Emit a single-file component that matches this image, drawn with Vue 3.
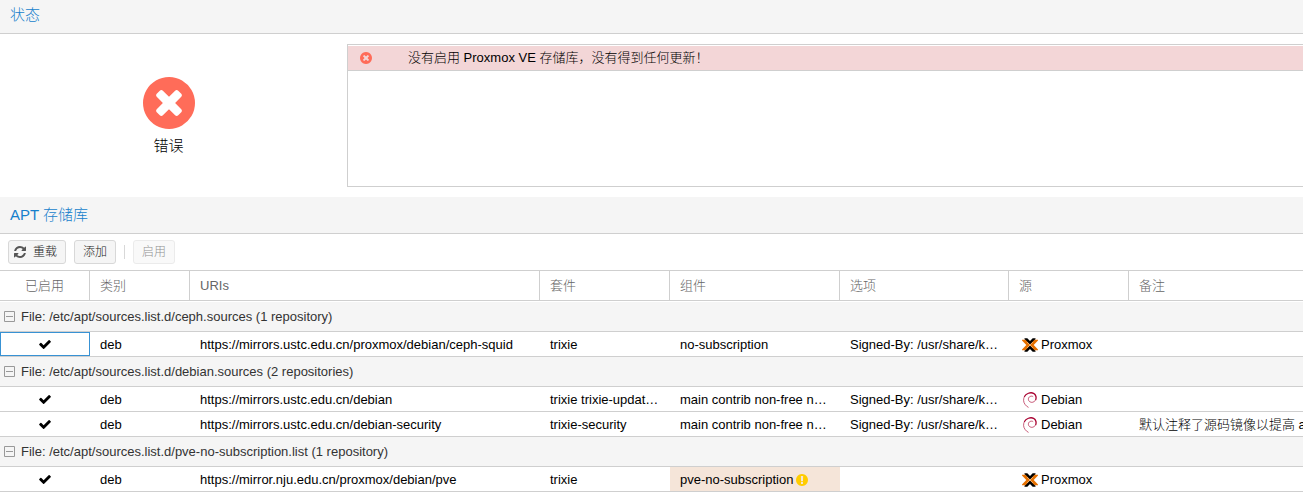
<script setup>
const icons = {
  error: 'M1277 1122q0-26-19-45L1077 896l181-181q19-19 19-45 0-27-19-46l-90-90q-19-19-46-19-26 0-45 19L896 715 715 534q-19-19-45-19-27 0-46 19l-90 90q-19 19-19 46 0 26 19 45l181 181-181 181q-19 19-19 45 0 27 19 46l90 90q19 19 46 19 26 0 45-19l181-181 181 181q19 19 45 19 27 0 46-19l90-90q19-19 19-46zm387-226q0 209-103 385.500T1281.500 1561.500 896 1664t-385.500-102.500T231 1281.500 128 896t103-385.500T510.500 230.500 896 128t385.500 102.500T1561 510.500 1664 896z',
  check: 'M1671 566q0 40-28 68l-724 724-136 136q-28 28-68 28t-68-28l-136-136-362-362q-28-28-28-68t28-68l136-136q28-28 68-28t68 28l294 295 656-657q28-28 68-28t68 28l136 136q28 28 28 68z',
  refresh: 'M1639 1056q0 5-1 7-64 268-268 434.500T892 1664q-146 0-282.500-55T366 1452l-129 129q-19 19-45 19t-45-19-19-45v-448q0-26 19-45t45-19h448q26 0 45 19t19 45-19 45l-137 137q71 66 161 102t187 36q134 0 250-65t186-179q11-17 53-117 8-23 30-23h192q13 0 22.500 9.500t9.500 22.500zm25-800v448q0 26-19 45t-45 19h-448q-26 0-45-19t-19-45 19-45l138-138q-148-137-349-137-134 0-250 65T460 628q-11 17-53 117-8 23-30 23H178q-13 0-22.500-9.500T146 736v-7q65-268 270-434.500T896 128q146 0 284 55.500T1425 340l130-129q19-19 45-19t45 19 19 45z',
  warning: 'M896 128q209 0 385.500 103T1561 510.500 1664 896t-103 385.500-279.500 279.500T896 1664t-385.500-103T231 1281.500 128 896t103-385.500T510.500 231 896 128zm128 1247v-190q0-14-9-23.500t-22-9.500H801q-13 0-23 10t-10 23v190q0 13 10 23t23 10h192q13 0 22-9.500t9-23.500zm-2-344l18-621q0-12-10-18-10-8-24-8H786q-14 0-24 8-10 6-10 18l17 621q0 10 10 17.500t24 7.500h185q14 0 23.500-7.500t10.500-17.500z',
}

const columns = ['已启用', '类别', 'URIs', '套件', '组件', '选项', '源', '备注']

const groups = [
  {
    title: 'File: /etc/apt/sources.list.d/ceph.sources (1 repository)',
    rows: [
      { uri: 'https://mirrors.ustc.edu.cn/proxmox/debian/ceph-squid', suite: 'trixie', component: 'no-subscription', options: 'Signed-By: /usr/share/k…', origin: 'Proxmox', comment: '', focused: true },
    ],
  },
  {
    title: 'File: /etc/apt/sources.list.d/debian.sources (2 repositories)',
    rows: [
      { uri: 'https://mirrors.ustc.edu.cn/debian', suite: 'trixie trixie-updat…', component: 'main contrib non-free n…', options: 'Signed-By: /usr/share/k…', origin: 'Debian', comment: '' },
      { uri: 'https://mirrors.ustc.edu.cn/debian-security', suite: 'trixie-security', component: 'main contrib non-free n…', options: 'Signed-By: /usr/share/k…', origin: 'Debian', comment: '默认注释了源码镜像以提高 a' },
    ],
  },
  {
    title: 'File: /etc/apt/sources.list.d/pve-no-subscription.list (1 repository)',
    rows: [
      { uri: 'https://mirror.nju.edu.cn/proxmox/debian/pve', suite: 'trixie', component: 'pve-no-subscription', options: '', origin: 'Proxmox', comment: '', warn: true },
    ],
  },
]
</script>

<template>
  <main class="page">
    <section>
      <h2 class="title title-first">状态</h2>
      <div class="status">
        <div class="summary">
          <svg class="big-icon" viewBox="128 128 1536 1536" aria-hidden="true"><path :d="icons.error" /></svg>
          <span>错误</span>
        </div>
        <div class="messages">
          <div class="message">
            <svg class="small-icon red" viewBox="128 128 1536 1536" aria-hidden="true"><path :d="icons.error" /></svg>
            <span>没有启用 Proxmox VE 存储库，没有得到任何更新！</span>
          </div>
        </div>
      </div>
    </section>

    <section>
      <h2 class="title">APT 存储库</h2>
      <div class="toolbar">
        <button type="button" class="btn btn-reload">
          <svg viewBox="128 128 1536 1536" aria-hidden="true"><path :d="icons.refresh" /></svg>重载
        </button>
        <button type="button" class="btn">添加</button>
        <span class="separator"></span>
        <button type="button" class="btn" disabled>启用</button>
      </div>

      <table class="grid">
        <colgroup>
          <col class="c-enabled" /><col class="c-type" /><col class="c-uri" /><col class="c-suite" />
          <col class="c-component" /><col class="c-options" /><col class="c-origin" /><col />
        </colgroup>
        <thead>
          <tr><th v-for="c in columns" :key="c" scope="col">{{ c }}</th></tr>
        </thead>
        <tbody v-for="g in groups" :key="g.title">
          <tr class="group">
            <td colspan="8">
              <button type="button" class="group-toggle" aria-expanded="true">
                <svg viewBox="0 0 11 11" aria-hidden="true"><path d="M.5.500h10v10H.5zM2 5.500h7" /></svg>{{ g.title }}
              </button>
            </td>
          </tr>
          <tr v-for="r in g.rows" :key="r.uri" class="row">
            <td :class="{ focused: r.focused }">
              <svg class="check" viewBox="121 334 1550 1188" role="img" aria-label="已启用"><path :d="icons.check" /></svg>
            </td>
            <td>deb</td>
            <td>{{ r.uri }}</td>
            <td>{{ r.suite }}</td>
            <td :class="{ warned: r.warn }">
              {{ r.component }}<svg v-if="r.warn" class="small-icon yellow" viewBox="128 128 1536 1536" aria-hidden="true"><path :d="icons.warning" /></svg>
            </td>
            <td>{{ r.options }}</td>
            <td>
              <span class="origin">
                <svg v-if="r.origin === 'Proxmox'" viewBox="0 0 16 16" aria-hidden="true">
                  <path fill="#000" d="M2.500 1.300h2.800L8 4l2.700-2.700h2.800v.9L8.700 7H7.300L2.500 2.200zM2.500 14.700h2.800L8 12l2.700 2.700h2.800v-.9L8.700 9H7.300l-4.800 4.800z" />
                  <path fill="#e57000" d="M0 2.800h3.400L8 7.600v.8l-4.600 4.800H0v-.6L4.300 8 0 3.400zM16 2.800h-3.400L8 7.600v.8l4.600 4.800H16v-.6L11.700 8 16 3.400z" />
                  <path fill="none" stroke="#fff" stroke-opacity=".6" stroke-width=".6" d="M5 5l6 6M11 5l-6 6" />
                </svg>
                <svg v-else class="swirl" viewBox="0 0 16 16" aria-hidden="true">
                  <path stroke-width="1.300" d="M2.300 4.700C4 1.500 8.500-.2 11.600 1.300 14 2.500 14.600 5.700 13.600 7.900" />
                  <path stroke-width=".8" opacity=".8" d="M2.700 4C1 7 1.300 10.300 3.200 12.600c.9 1.200 2 2.200 3.300 2.800M13.600 7.900C12.600 10.300 9.400 11 7.700 9.700 5.800 8.300 6 5.500 8 4.500c1.200-.6 2.400-.4 3.200.2" />
                </svg>
                {{ r.origin }}
              </span>
            </td>
            <td class="comment">{{ r.comment }}</td>
          </tr>
        </tbody>
      </table>
    </section>
  </main>
</template>

<style>
body {
  margin: 0;
  background: #fff;
}
</style>

<style scoped>
.page {
  font-family: "Liberation Sans", "Noto Sans CJK SC", sans-serif;
  font-size: 13px;
  font-weight: 300;
  line-height: 20px;
  color: #000;
  overflow: hidden;
}
.title {
  margin: 0;
  padding: 8px 10px;
  font-size: 15px;
  font-weight: 300;
  line-height: 20px;
  color: #157fcc;
  background: #f5f5f5;
  border-bottom: 1px solid #cfcfcf;
}
.title-first {
  padding-top: 5px;
}
.status {
  display: flex;
  padding: 10px 0;
}
.summary {
  width: 337px;
  margin-right: 10px;
  padding-top: 1px;
  display: flex;
  flex-direction: column;
  align-items: center;
  justify-content: center;
  gap: 7px;
  font-size: 15px;
}
.big-icon {
  width: 52px;
  height: 52px;
  fill: #ff6c59;
}
.messages {
  flex: 1;
  min-height: 140px;
  padding-top: 1px;
  border: 1px solid #cfcfcf;
  border-right: 0;
}
.message {
  display: flex;
  align-items: center;
  gap: 36px;
  height: 24px;
  padding-left: 12px;
  background: #f3d6d7;
  border-bottom: 1px solid #cfcfcf;
}
.small-icon {
  width: 12px;
  height: 12px;
}
.red {
  fill: #ff6c59;
}
.yellow {
  margin-left: 3px;
  vertical-align: -2px;
  fill: #fc0;
}
.toolbar {
  display: flex;
  align-items: center;
  gap: 8px;
  padding: 6px 8px;
  border-bottom: 1px solid #cfcfcf;
}
.btn {
  display: flex;
  align-items: center;
  height: 24px;
  padding: 0 8px;
  font: inherit;
  font-size: 12px;
  color: #222;
  background: #f5f5f5;
  border: 1px solid #d8d8d8;
  border-radius: 3px;
}
.btn:disabled {
  opacity: 0.5;
}
.btn-reload {
  gap: 7px;
  padding-left: 5px;
}
.btn svg {
  width: 12px;
  height: 12px;
  fill: #555;
}
.separator {
  width: 1px;
  height: 14px;
  background: #d8d8d8;
}
.grid {
  width: 100%;
  table-layout: fixed;
  border-spacing: 0;
}
.c-enabled { width: 90px; }
.c-type { width: 100px; }
.c-uri { width: 350px; }
.c-suite { width: 130px; }
.c-component { width: 170px; }
.c-options { width: 169px; }
.c-origin { width: 120px; }
.grid th,
.grid td {
  padding: 0 10px;
  text-align: left;
  white-space: nowrap;
  overflow: hidden;
  text-overflow: ellipsis;
  border-bottom: 1px solid #cfcfcf;
}
.grid th {
  height: 29px;
  font-weight: 300;
  color: #666;
  border-right: 1px solid #cfcfcf;
}
.grid th:first-child,
.row td:first-child {
  text-align: center;
}
.grid th:last-child {
  border-right: 0;
}
.grid .row td {
  height: 22px;
  padding-top: 2px;
}
.grid .comment {
  text-overflow: clip;
}
.group td {
  height: 29px;
  padding: 0 4px;
  background: #f5f5f5;
}
.grid thead + tbody .group td {
  border-top: 1px solid #fff;
}
.group-toggle {
  display: flex;
  align-items: center;
  gap: 6px;
  padding: 0;
  font: inherit;
  color: #333;
  background: none;
  border: 0;
}
.group-toggle svg {
  width: 11px;
  height: 11px;
  fill: none;
  stroke: #999;
}
.focused {
  box-shadow: inset 0 0 0 1px #3892d4;
}
.warned {
  background: #f5e5d9;
}
.check {
  width: 12px;
  height: 9px;
}
.origin {
  display: flex;
  align-items: center;
  gap: 3px;
  padding-left: 3px;
}
.origin svg {
  width: 16px;
  height: 16px;
}
.swirl {
  fill: none;
  stroke: #a80030;
}
</style>
